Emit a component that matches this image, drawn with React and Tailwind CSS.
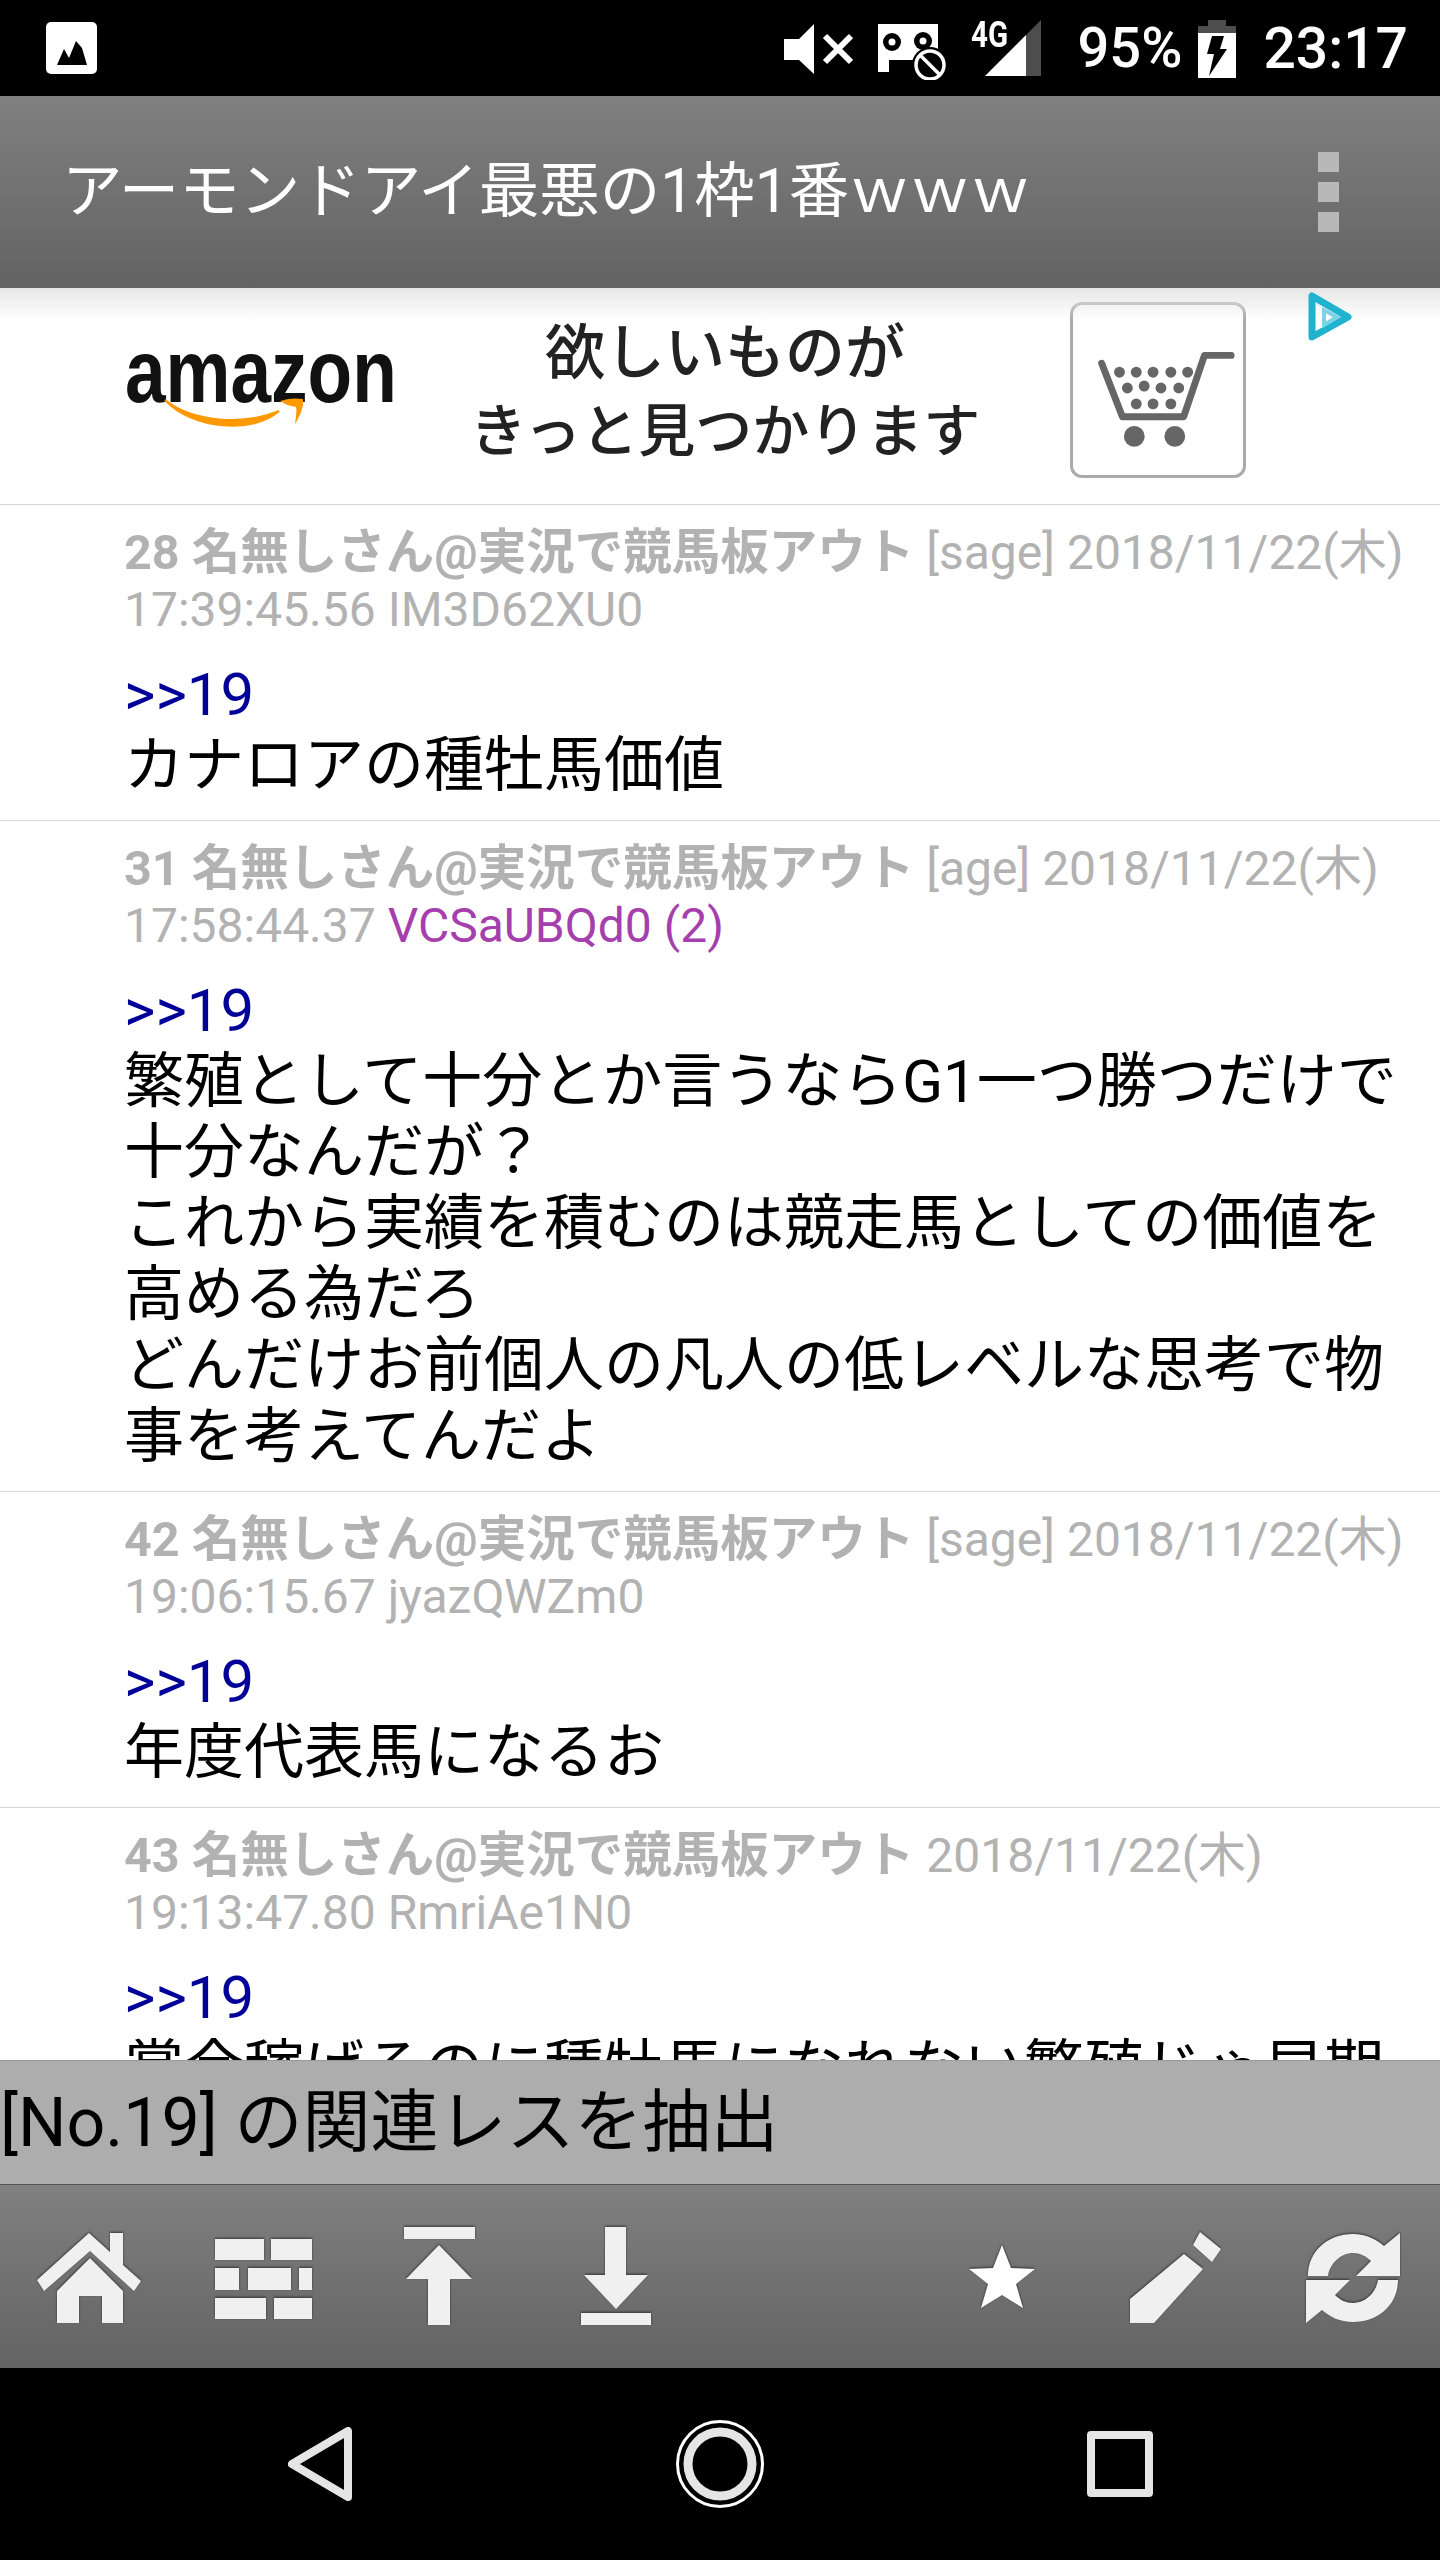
import React from "react"

const posts = [
    {
        no: 28,
        mail: "[sage] ",
        date: "2018/11/22(木)",
        time: "17:39:45.56 ",
        id: "IM3D62XU0",
        body: "カナロアの種牡馬価値",
    },
    {
        no: 31,
        mail: "[age] ",
        date: "2018/11/22(木)",
        time: "17:58:44.37 ",
        id: "VCSaUBQd0 (2)",
        hot: true,
        body: "繁殖として十分とか言うならG1一つ勝つだけで十分なんだが？\nこれから実績を積むのは競走馬としての価値を高める為だろ\nどんだけお前個人の凡人の低レベルな思考で物事を考えてんだよ",
    },
    {
        no: 42,
        mail: "[sage] ",
        date: "2018/11/22(木)",
        time: "19:06:15.67 ",
        id: "jyazQWZm0",
        body: "年度代表馬になるお",
    },
    {
        no: 43,
        mail: "",
        date: "2018/11/22(木)",
        time: "19:13:47.80 ",
        id: "RmriAe1N0",
        body: "賞金稼げるのに種牡馬になれない繁殖じゃ早期",
    },
]

function Post({ post }) {
    return (
        <div className="border-b border-b-[#d8d8d8] pt-[19px] pb-[19px] pl-[124px] pr-[15px]">
            <p className="text-[48px] leading-[57px] text-[#b2b2b2]">
                <span className="text-[48.5px] font-bold">{post.no} 名無しさん@実況で競馬板アウト </span>
                {post.mail}
                {post.date} {post.time}
                <span className={post.hot ? "text-[#a63fae]" : ""}>{post.id}</span>
            </p>
            <div className="mt-[21px] text-[60px] leading-[71px] text-black whitespace-pre-line">
                <p className="text-[#000099]">&gt;&gt;19</p>
                <p>{post.body}</p>
            </div>
        </div>
    )
}

function Cart() {
    const dots = [
        [47, 68], [64, 68], [81, 68], [99, 68], [116, 68],
        [55, 84], [72, 82], [89, 84], [107, 84],
        [64, 100], [81, 100], [99, 100],
    ]
    return (
        <svg viewBox="0 0 172 172" className="h-full w-full">
            <path d="M29 59L50 113H112L133 51H160" fill="none" stroke="#666" strokeWidth="7" strokeLinecap="round" strokeLinejoin="round" />
            {dots.map(([x, y]) => (
                <circle key={`${x}-${y}`} cx={x} cy={y} r="5.5" fill="#666" />
            ))}
            <circle cx="62" cy="133" r="10.5" fill="#666" />
            <circle cx="103" cy="133" r="10.5" fill="#666" />
        </svg>
    )
}

function StatusBar() {
    return (
        <div className="flex h-[96px] items-center bg-black pl-[46px] pr-[32px] text-white">
            <svg width="51" height="52" viewBox="0 0 51 52">
                <rect width="51" height="52" rx="5" fill="#fff" />
                <path d="M6 43L13 27L18 36L25 19L31 26L36 43Z" transform="translate(5 0)" fill="#000" />
            </svg>
            <div className="flex-1" />
            <svg width="69" height="50" viewBox="0 0 69 50" className="mt-[1px]">
                <path d="M0 15H15L30 0V50L15 36H0Z" fill="#fff" />
                <path d="M41 12L67 38M67 12L41 38" stroke="#fff" strokeWidth="6" />
            </svg>
            <svg width="69" height="56" viewBox="0 0 69 56" className="ml-[25px] mt-[8px]">
                <path d="M0 0H60V30L34 36H11V48H0Z" fill="#fff" />
                <circle cx="14" cy="18" r="9" fill="#000" />
                <circle cx="14" cy="18" r="3.5" fill="#fff" />
                <circle cx="45" cy="17" r="9" fill="#000" />
                <circle cx="45" cy="17" r="3.5" fill="#fff" />
                <circle cx="52" cy="41" r="18" fill="#000" />
                <circle cx="52" cy="41" r="14" fill="none" stroke="#fff" strokeWidth="3.5" />
                <path d="M43 32L61 50" stroke="#fff" strokeWidth="3.5" />
            </svg>
            <div className="relative ml-[24px] h-[56px] w-[70px]">
                <span className="absolute left-0 top-[0px] origin-left scale-x-[0.82] text-[36px] font-bold leading-[30px]">4G</span>
                <svg width="56" height="56" viewBox="0 0 56 56" className="absolute left-[14px] top-0">
                    <path d="M0 56L41 15V56Z" fill="#fff" />
                    <path d="M41 15L56 0V56H41Z" fill="#4d4d4d" />
                </svg>
            </div>
            <span className="ml-[36px] text-[56px] font-medium leading-none">95%</span>
            <svg width="38" height="58" viewBox="0 0 38 58" className="ml-[16px] mt-[2px]">
                <path d="M10 0H28V6H38V13H0V6H10Z" fill="#4d4d4d" />
                <path d="M0 13H38V58H0Z" fill="#fff" />
                <path d="M14 16H26L22 29H29L11 56L16 34H9Z" fill="#000" />
            </svg>
            <span className="ml-[27px] text-[57px] font-medium leading-none">23:17</span>
        </div>
    )
}

function ActionIcon({ w, h, className, children }) {
    return (
        <svg
            width={w}
            height={h}
            viewBox={`0 0 ${w} ${h}`}
            fill="#f0f0f0"
            className={`drop-shadow-[0_-1px_1px_rgba(0,0,0,0.55)] ${className}`}
        >
            {children}
        </svg>
    )
}

function BottomBar() {
    return (
        <div className="flex h-[183px] items-start bg-gradient-to-b from-[#808080] to-[#636363] pl-[37px]">
            <ActionIcon w={104} h={90} className="mt-[48px]">
                <path d="M0 47L52 0L73 19V0H86V32L104 48L97 58L53 18L7 58Z" />
                <path d="M53 25L86 58V90H65V63H42V90H20V58Z" />
            </ActionIcon>
            <ActionIcon w={97} h={80} className="ml-[74px] mt-[54px]">
                <path d="M0 0H49V21H0ZM56 0H97V21H56ZM0 29H24V51H0ZM33 29H76V51H33ZM84 29H97V51H84ZM0 59H51V80H0ZM59 59H97V80H59Z" />
            </ActionIcon>
            <ActionIcon w={71} h={98} className="ml-[92px] mt-[42px]">
                <path d="M0 0H71V12H0ZM35 18L68 52H46V98H24V52H2Z" />
            </ActionIcon>
            <ActionIcon w={70} h={98} className="ml-[106px] mt-[42px]">
                <path d="M24 0H45V48H67L35 82L3 48H24ZM0 86H70V98H0Z" />
            </ActionIcon>
            <ActionIcon w={66} h={63} className="ml-[318px] mt-[60px]">
                <path d="M33 0L42 23L66 24L47 39L54 63L33 50L12 63L19 39L0 24L24 23Z" fill="#fff" />
            </ActionIcon>
            <ActionIcon w={91} h={91} className="ml-[95px] mt-[47px]">
                <path d="M0 67L54 22L73 37L24 91H0ZM70 0L91 17L82 30L63 13Z" />
            </ActionIcon>
            <ActionIcon w={94} h={94} className="ml-[85px] mt-[46px]">
                <path d="M2 45C2 20 22 3 47 3C60 3 70 8 78 15L94 2V45H50L65 30C60 25 54 22 47 22C35 22 24 32 22 45Z" />
                <path d="M92 49C92 74 72 91 47 91C34 91 24 86 16 79L0 92V49H44L29 64C34 69 40 72 47 72C59 72 70 62 72 49Z" />
            </ActionIcon>
        </div>
    )
}

function NavBar() {
    return (
        <div className="flex h-[192px] items-center bg-black pl-[288px]">
            <svg width="65" height="74" viewBox="0 0 65 74">
                <path d="M60 4V70L4 37Z" fill="none" stroke="#e5e5e5" strokeWidth="8" strokeLinejoin="round" />
            </svg>
            <svg width="88" height="88" viewBox="0 0 88 88" className="ml-[323px]">
                <circle cx="44" cy="44" r="42.5" fill="none" stroke="#fff" strokeWidth="3" />
                <circle cx="44" cy="44" r="32" fill="none" stroke="#e5e5e5" strokeWidth="9" />
            </svg>
            <div className="ml-[323px] h-[66px] w-[66px] rounded-[4px] border-[8px] border-[#e5e5e5]" />
        </div>
    )
}

export default function App() {
    return (
        <div className="flex h-[2560px] w-[1440px] flex-col overflow-hidden bg-white font-[Roboto,'Noto_Sans_CJK_JP',sans-serif]">
            <StatusBar />
            <div className="flex h-[192px] items-center justify-between bg-gradient-to-b from-[#808080] to-[#636363] pl-[62px] pr-[101px]">
                <h1 className="text-[60.5px] font-normal leading-none text-white">アーモンドアイ最悪の1枠1番ｗｗｗ</h1>
                <div className="flex flex-col gap-[10px]">
                    <span className="h-[20px] w-[21px] bg-[#b8b8b8]" />
                    <span className="h-[20px] w-[21px] bg-[#b8b8b8]" />
                    <span className="h-[20px] w-[21px] bg-[#b8b8b8]" />
                </div>
            </div>
            <div className="relative min-h-0 flex-1 overflow-hidden">
                <div className="absolute inset-x-0 top-0 h-[32px] bg-gradient-to-b from-[#e6e6e6] to-transparent" />
                <div className="flex h-[217px] items-start border-b border-b-[#d8d8d8] pl-[125px]">
                    <div className="relative mt-[46px] h-[100px] w-[275px]">
                        <span className="absolute left-0 top-[-13px] origin-left scale-x-[0.82] font-['Liberation_Sans',sans-serif] text-[89px] font-bold leading-[100px] text-[#111]">
                            amazon
                        </span>
                        <svg width="150" height="40" viewBox="0 0 150 40" className="absolute left-[38px] top-[64px]">
                            <path d="M2 2C30 24 80 28 116 13C90 36 30 32 2 2Z" fill="#f90" stroke="#f90" strokeWidth="2" />
                            <path d="M117 3C126 0 133 0 140 1C141 9 137 18 132 26C133 18 134 13 133 9C128 8 123 7 117 3Z" fill="#f90" />
                        </svg>
                    </div>
                    <div className="ml-[65px] mt-[27px] w-[520px] text-center font-medium leading-[78px] text-[#222]">
                        <p className="text-[60px]">欲しいものが</p>
                        <p className="text-[57px]">きっと見つかります</p>
                    </div>
                    <div className="ml-[85px] mt-[14px] h-[176px] w-[176px] rounded-[12px] border-[3px] border-[#aaa]">
                        <Cart />
                    </div>
                    <svg width="46" height="50" viewBox="0 0 46 50" className="absolute left-[1307px] top-[4px]">
                        <path d="M5 4V45L41 25Z" fill="none" stroke="#1fb3d0" strokeWidth="7" strokeLinejoin="round" />
                        <path d="M17 18V33L30 25Z" fill="none" stroke="#7ad4e6" strokeWidth="4" />
                    </svg>
                </div>
                {posts.map((post) => (
                    <Post key={post.no} post={post} />
                ))}
            </div>
            <div className="flex h-[125px] items-center border-y border-t-[#999] border-b-[#555] bg-[#adadad] text-[68px] leading-none text-black">
                [No.19] の関連レスを抽出
            </div>
            <BottomBar />
            <NavBar />
        </div>
    )
}
